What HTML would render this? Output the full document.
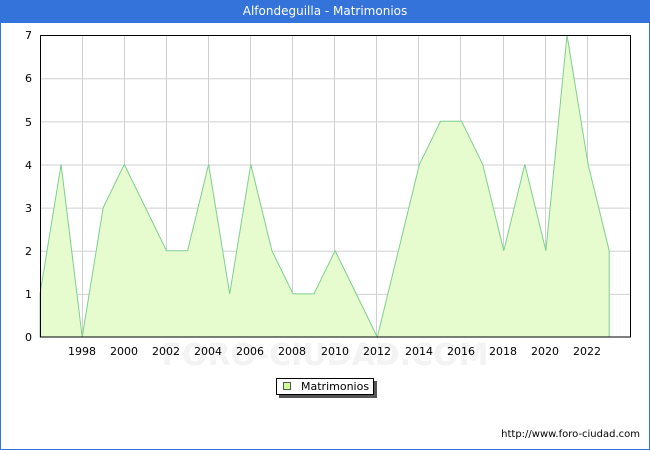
<!DOCTYPE html>
<html><head><meta charset="utf-8"><style>
body{margin:0;width:650px;height:450px;overflow:hidden;background:#fff;font-family:"DejaVu Sans","Liberation Sans",sans-serif;}
.frame{position:absolute;left:0;top:0;width:648px;height:448px;border:1px solid #3473d9;}
.hdr{position:absolute;left:0;top:0;width:650px;height:23px;background:#3473d9;color:#fff;font-size:12px;text-align:center;line-height:23px;}
</style></head><body>
<div class="frame"></div>
<div class="hdr">Alfondeguilla - Matrimonios</div>
<svg width="650" height="450" style="position:absolute;left:0;top:0" font-family="DejaVu Sans, Liberation Sans, sans-serif" font-size="11">
<g stroke="#d0d0d0" stroke-width="1">
<line x1="40" y1="294.4" x2="631" y2="294.4"/><line x1="40" y1="251.3" x2="631" y2="251.3"/><line x1="40" y1="208.1" x2="631" y2="208.1"/><line x1="40" y1="165" x2="631" y2="165"/><line x1="40" y1="121.9" x2="631" y2="121.9"/><line x1="40" y1="78.7" x2="631" y2="78.7"/>
<line x1="82.5" y1="35" x2="82.5" y2="337"/><line x1="124.5" y1="35" x2="124.5" y2="337"/><line x1="166.5" y1="35" x2="166.5" y2="337"/><line x1="208.5" y1="35" x2="208.5" y2="337"/><line x1="250.5" y1="35" x2="250.5" y2="337"/><line x1="292.5" y1="35" x2="292.5" y2="337"/><line x1="334.5" y1="35" x2="334.5" y2="337"/><line x1="376.5" y1="35" x2="376.5" y2="337"/><line x1="418.5" y1="35" x2="418.5" y2="337"/><line x1="460.5" y1="35" x2="460.5" y2="337"/><line x1="503.5" y1="35" x2="503.5" y2="337"/><line x1="545.5" y1="35" x2="545.5" y2="337"/><line x1="587.5" y1="35" x2="587.5" y2="337"/>
</g>
<text x="325" y="365" text-anchor="middle" font-size="30" fill="#f3f3f3" font-weight="bold">FORO-CIUDAD.COM</text>
<polygon fill="#e6fccf" stroke="#7fce8f" stroke-width="1" points="40,337 40,293.9 61.1,164.4 82.2,337 103.2,207.6 124.3,164.4 145.4,207.6 166.5,250.7 187.6,250.7 208.6,164.4 229.7,293.9 250.8,164.4 271.9,250.7 293,293.9 314,293.9 335.1,250.7 356.2,293.9 377.3,337 398.4,250.7 419.4,164.4 440.5,121.3 461.6,121.3 482.7,164.4 503.8,250.7 524.8,164.4 545.9,250.7 567,35 588.1,164.4 609.2,250.7 609.2,337"/>
<rect x="40.5" y="35.5" width="590" height="301.5" fill="none" stroke="#000"/>
<g fill="#000" text-anchor="end">
<text x="32" y="341">0</text><text x="32" y="298">1</text><text x="32" y="255">2</text><text x="32" y="212">3</text><text x="32" y="169">4</text><text x="32" y="126">5</text><text x="32" y="82">6</text><text x="32" y="39">7</text>
</g>
<g fill="#000" text-anchor="middle">
<text x="82" y="355">1998</text><text x="124" y="355">2000</text><text x="166" y="355">2002</text><text x="208" y="355">2004</text><text x="250" y="355">2006</text><text x="292" y="355">2008</text><text x="335" y="355">2010</text><text x="377" y="355">2012</text><text x="419" y="355">2014</text><text x="461" y="355">2016</text><text x="503" y="355">2018</text><text x="545" y="355">2020</text><text x="587" y="355">2022</text>
</g>
<rect x="279" y="381" width="98" height="17" fill="#555"/>
<rect x="276.5" y="378.5" width="97" height="16" fill="#fff" stroke="#000"/>
<rect x="283.5" y="382.5" width="7" height="7" fill="#ccff99" stroke="#555"/>
<text x="301" y="390" fill="#000">Matrimonios</text>
<text x="640" y="437" text-anchor="end" font-size="10" fill="#000">http://www.foro-ciudad.com</text>
</svg>
</body></html>
